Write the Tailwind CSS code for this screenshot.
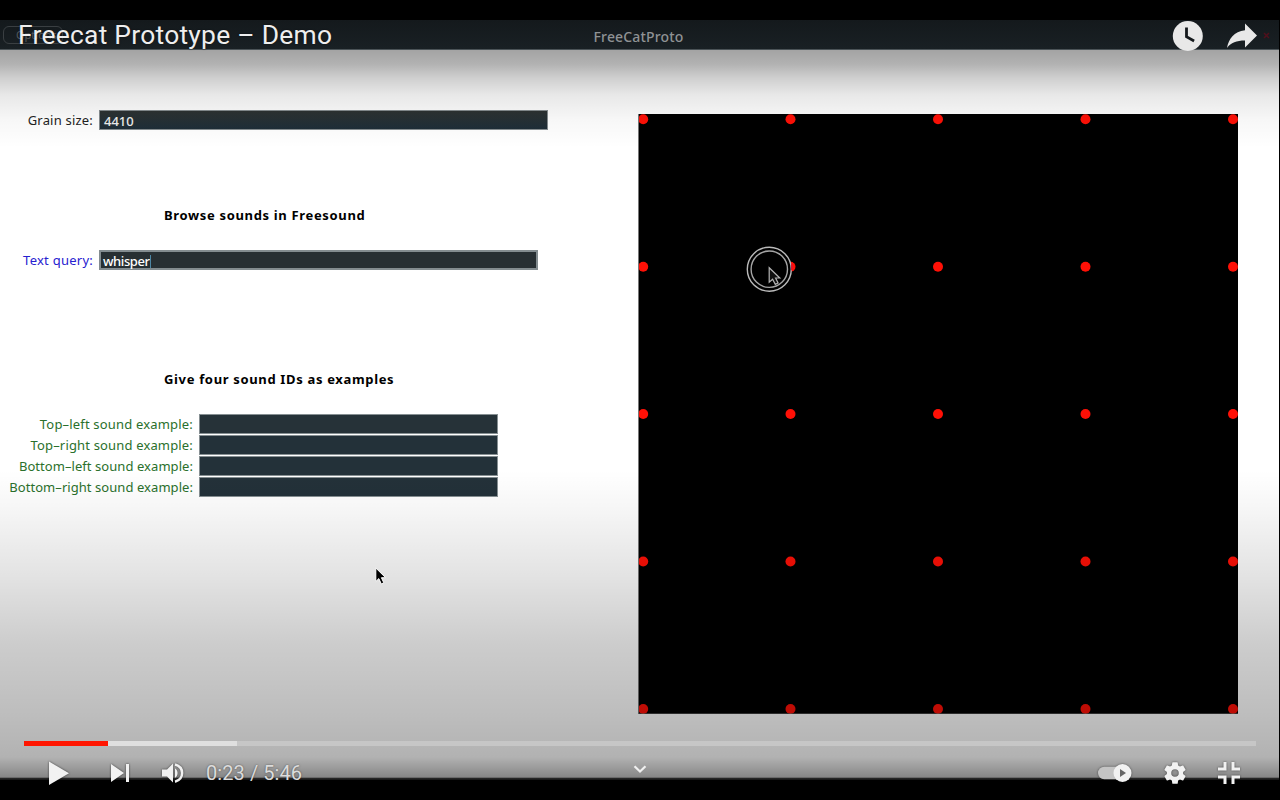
<!DOCTYPE html>
<html lang="en">
<head>
<meta charset="utf-8">
<title>Freecat Prototype – Demo</title>
<script src="https://cdn.jsdelivr.net/npm/@tailwindcss/browser@4"></script>
</head>
<body class="bg-black">
<div class="relative w-[1280px] h-[800px] overflow-hidden bg-black font-['Noto_Sans',sans-serif] text-[13px] leading-5">
  <!-- video frame -->
  <main class="w-[1279px] h-full pt-5 flex flex-col">
    <header class="relative h-[30px] shrink-0 bg-linear-to-b from-[#14191c] to-[#192024] border-b border-[#4b5357] flex items-center justify-center">
      <span class="absolute left-[3px] top-[6px] w-[60px] h-[18px] rounded-md border border-[#3a3f42] text-[#55595b] text-[11px] leading-4 pl-3">Options</span>
      <span class="text-[#8f9294] text-[14px] font-medium tracking-[0.15px] translate-y-[2px] -translate-x-[1px]">FreeCatProto</span>
      <svg class="absolute right-[9px] top-[12px] size-[7px]" viewBox="0 0 7 7" stroke="#4f101c" stroke-width="1.6"><path d="M1 1l5 5M6 1l-5 5"/></svg>
    </header>
    <div class="h-[728px] shrink-0 bg-white flex">
      <section class="w-[638px] pt-[60px] shrink-0">
        <div class="flex items-center h-5">
          <label class="w-[93px] mr-[6px] text-right text-[#222] tracking-[0.2px]">Grain size:</label>
          <div class="w-[449px] h-5 bg-linear-to-b from-[#2d3232] to-[#1e2e38] border border-[#868d90] text-[#eee] pl-1 leading-5 font-medium">4410</div>
        </div>
        <h2 class="mt-[75px] pl-[164px] h-5 font-bold text-black tracking-[0.66px]">Browse sounds in Freesound</h2>
        <div class="mt-[25px] flex items-center h-5">
          <label class="w-[93px] mr-[6px] text-right text-[#2721d0] tracking-[0.25px]">Text query:</label>
          <div class="w-[439px] h-5 bg-[#272f33] border-2 border-[#838c90] text-white pl-[2px] pt-[2px] leading-[16px] flex items-center font-medium tracking-[-0.4px]"><span>whisper</span><span class="w-px h-[13px] bg-[#4c86a5]"></span></div>
        </div>
        <h2 class="mt-[99px] pl-[164px] h-5 font-bold text-black tracking-[0.66px]">Give four sound IDs as examples</h2>
        <div class="mt-[25px] flex flex-col gap-px text-[#2a702c]">
          <div class="flex h-5"><label class="w-[193px] mr-[6px] text-right tracking-[0.18px]">Top–left sound example:</label><div class="w-[299px] bg-[#263238] border border-[#868f92]"></div></div>
          <div class="flex h-5"><label class="w-[193px] mr-[6px] text-right tracking-[0.16px]">Top–right sound example:</label><div class="w-[299px] bg-[#233139] border border-[#868f92]"></div></div>
          <div class="flex h-5"><label class="w-[193px] mr-[6px] text-right tracking-[0.06px]">Bottom–left sound example:</label><div class="w-[299px] bg-[#233139] border border-[#868f92]"></div></div>
          <div class="flex h-5"><label class="w-[193px] mr-[6px] text-right tracking-[0.06px]">Bottom–right sound example:</label><div class="w-[299px] bg-[#233139] border border-[#868f92]"></div></div>
        </div>
      </section>
      <svg class="mt-16 w-[600px] h-[600px] shrink-0" viewBox="0 0 600 600">
        <defs>
          <g id="row" fill="#ff1006"><circle cx="5.200" cy="0" r="5"/><circle cx="152.500" cy="0" r="5"/><circle cx="300" cy="0" r="5"/><circle cx="447.500" cy="0" r="5"/><circle cx="595" cy="0" r="5"/></g>
        </defs>
        <rect width="600" height="600" fill="#000"/>
        <use href="#row" y="5.3"/><use href="#row" y="152.8"/><use href="#row" y="300"/><use href="#row" y="447.5"/><use href="#row" y="595"/>
        <path d="M.5 0V600H600" fill="none" stroke="#777" stroke-width="1"/>
        <circle cx="131.300" cy="155.200" r="22" fill="#000" stroke="#b9b9b9" stroke-width="1.400"/>
        <circle cx="131.300" cy="155.200" r="18.200" fill="none" stroke="#a5a5a5" stroke-width="1.400"/>
        <path d="M153 149a5 5 0 0 1 0 8z" fill="#e0142c"/>
        <path d="M131.200 153.700v14.500l3.400-3 2.700 5.200 2.800-1.400-2.500-5h4.200z" fill="#111" stroke="#b4b4b4" stroke-width="1.200"/>
      </svg>
    </div>
  </main>

  <!-- player shading -->
  <div class="absolute inset-x-0 top-[50px] h-[100px] bg-[linear-gradient(to_bottom,rgb(0_0_0/.36)_0,rgb(0_0_0/.30)_14px,rgb(0_0_0/.19)_28px,rgb(0_0_0/.09)_45px,rgb(0_0_0/.03)_70px,transparent_98px)]"></div>
  <div class="absolute inset-x-0 top-[470px] h-[308px] bg-[linear-gradient(to_bottom,transparent_0,rgb(0_0_0/.03)_35px,rgb(0_0_0/.11)_105px,rgb(0_0_0/.20)_175px,rgb(0_0_0/.26)_245px,rgb(0_0_0/.30)_287px,rgb(0_0_0/.37)_295px,rgb(0_0_0/.47)_307px,rgb(0_0_0/.7)_308px)]"></div>
  <div class="absolute left-0 top-[778px] w-[1279px] h-[2px] bg-linear-to-b from-[#2b2b2b] to-[#161616]"></div>

  <!-- player chrome -->
  <div class="absolute inset-0 flex flex-col justify-between font-[Roboto,sans-serif]">
    <div class="flex items-start justify-between pl-[18px] pr-[22px] pt-5">
      <h1 class="text-[26.4px] leading-[30px] tracking-[0.26px] text-[#eee] [text-shadow:0_0_2px_rgb(0_0_0/.5)]">Freecat Prototype – Demo</h1>
      <div class="flex gap-[23px] pt-px">
        <svg class="w-[32px] h-[32px]" viewBox="0 0 32 32"><circle cx="16.800" cy="15" r="15" fill="#e8e8e8"/><path d="M15.500 6.500v9.200l7.600 4.200" fill="none" stroke="#14191c" stroke-width="2.800"/></svg>
        <svg class="w-[32px] h-[32px]" viewBox="0 0 32 32"><path d="M19 2.500L31 14.500 19 26.500V19.500C10.500 19.500 5 21.500 1 27 2.500 18 8 10.500 19 9.200z" fill="#e8e8e8"/></svg>
      </div>
    </div>
    <div class="h-[59px]">
      <div class="mx-6 h-[5px] flex bg-[#c6c6c6]"><div class="w-[84px] bg-[#ff1500]"></div><div class="w-[129px] bg-[#dfdfdf]"></div></div>
      <div class="h-[53px] flex items-center pl-[48px] pr-[39px] text-[#f2f2f2]">
        <svg class="w-[22px] h-[26px] shrink-0 drop-shadow-[0_0_1px_rgb(0_0_0/.6)]" viewBox="0 0 22 26" fill="currentColor"><path d="M1 1.500L21 13.300 1 25z"/></svg>
        <svg class="ml-10 w-[20px] h-[20px] shrink-0 drop-shadow-[0_0_1px_rgb(0_0_0/.6)]" viewBox="0 0 20 20" fill="currentColor"><path d="M1 1l13 9-13 9zM16 1h3v18h-3z"/></svg>
        <svg class="ml-[31px] w-[24px] h-[24px] shrink-0 drop-shadow-[0_0_1px_rgb(0_0_0/.6)]" viewBox="0 0 24 24"><path d="M1 8.500h5l6-6v19l-6-6H1zM14 7.500c3.500 1.700 3.500 7.500 0 9.200z" fill="currentColor"/><path d="M14 3.500c9.500 2.500 9.500 14.500 0 17.200" fill="none" stroke="currentColor" stroke-width="2.500"/></svg>
        <span class="ml-[21px] text-[20px] leading-6 tracking-[0.08px] text-[#dcdcdc] [text-shadow:0_0_2px_rgb(0_0_0/.5)]">0:23 / 5:46</span>
        <div class="flex-1"></div>
        <svg class="w-[34px] h-[20px] shrink-0 drop-shadow-[0_0_1px_rgb(0_0_0/.5)]" viewBox="0 0 34 20"><rect x="0" y="3.800" width="28" height="12.500" rx="6.200" fill="#c4c4c4"/><circle cx="24.500" cy="10" r="9" fill="#f2f2f2"/><path d="M22 6l6 4-6 4z" fill="#666"/></svg>
        <svg class="ml-[30px] w-[26px] h-[26px] shrink-0 drop-shadow-[0_0_1px_rgb(0_0_0/.5)]" viewBox="0 0 24 24" fill="currentColor"><path d="M19.430 12.980c.040-.320.070-.640.070-.980s-.030-.660-.070-.980l2.110-1.650c.190-.150.240-.420.120-.640l-2-3.460c-.120-.220-.390-.300-.610-.220l-2.490 1c-.520-.400-1.080-.730-1.690-.980l-.380-2.650C14.460 2.180 14.250 2 14 2h-4c-.250 0-.460.180-.490.420l-.380 2.650c-.610.250-1.170.590-1.690.980l-2.490-1c-.230-.090-.490 0-.610.220l-2 3.460c-.130.220-.070.490.120.640l2.110 1.650c-.040.320-.070.650-.070.980s.030.660.070.980l-2.110 1.650c-.190.150-.240.420-.120.640l2 3.460c.120.220.390.300.610.220l2.490-1c.520.400 1.080.730 1.690.980l.380 2.650c.030.240.240.420.490.420h4c.250 0 .460-.180.490-.420l.380-2.650c.610-.250 1.170-.590 1.690-.980l2.490 1c.230.090.490 0 .610-.220l2-3.460c.120-.220.070-.490-.120-.640l-2.110-1.650zM12 15.500a3.500 3.500 0 1 1 0-7 3.500 3.500 0 0 1 0 7z"/></svg>
        <svg class="ml-[29px] w-[24px] h-[24px] shrink-0 drop-shadow-[0_0_1px_rgb(0_0_0/.5)]" viewBox="0 0 24 24" fill="none" stroke="currentColor" stroke-width="3"><path d="M8 1v7H1M16 1v7H23M8 23v-7H1M16 23v-7H23"/></svg>
      </div>
    </div>
  </div>
  <svg class="absolute left-[633px] top-[764px] w-[14px] h-[10px]" viewBox="0 0 14 10" fill="none" stroke="#f0f0f0" stroke-width="2.200"><path d="M1.500 2.200L7 7.500l5.500-5.300"/></svg>
  <svg class="absolute left-[375px] top-[567px] w-[12px] h-[18px]" viewBox="0 0 12 18"><path d="M.8 1v13.500l3-2.900 2.500 5.300 2.500-1.100-2.400-5.100h4.200z" fill="#000" stroke="#fff" stroke-width="1"/></svg>
</div>
</body>
</html>
